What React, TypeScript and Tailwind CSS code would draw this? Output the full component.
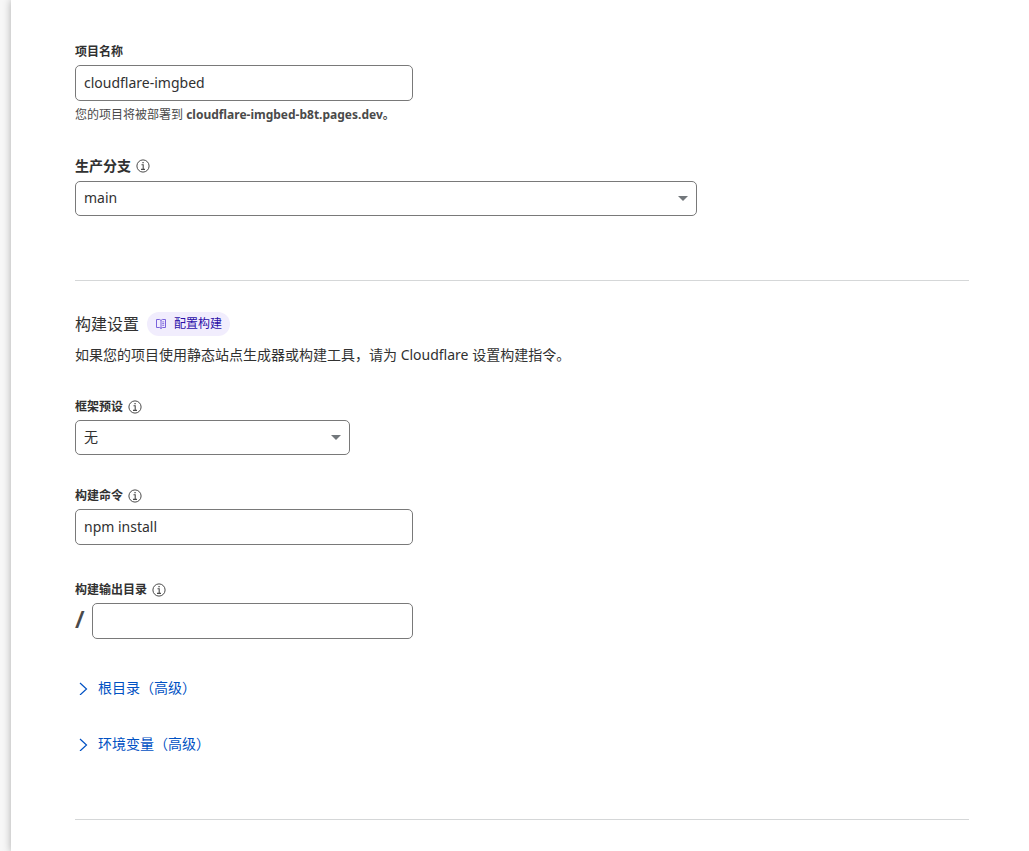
import { useId, type ReactNode } from "react";

const fieldBorder = "rounded-[5px] border border-[#797979] bg-white";

function InfoIcon() {
  return (
    <svg viewBox="0 0 14 14" className="size-3.5 shrink-0" fill="none" stroke="#4a4a4a" aria-hidden="true">
      <circle cx="7" cy="7" r="6.1" strokeWidth="1" />
      <path d="M5.5 5.7h1.7v4.6M5 10.4h4" strokeWidth="1.1" />
      <path d="M6.4 3.6h1.3" strokeWidth="1.4" />
    </svg>
  );
}

function BookIcon() {
  return (
    <svg viewBox="0 0 12 12" className="size-3 shrink-0" fill="none" stroke="#7a63dc" aria-hidden="true">
      <path d="M1.5 1.5h3.2L6 2.5l1.3-1h3.2v8H7.3l-1.3 1-1.3-1H1.5zM6 2.5v8" />
      <path d="M7.2 3.9h2M7.2 5.6h2M7.2 7.3h2" strokeWidth="0.9" />
    </svg>
  );
}

function Label({ htmlFor, info, large, children }: { htmlFor: string; info?: boolean; large?: boolean; children: ReactNode }) {
  return (
    <div className="mb-[5px] flex items-center gap-[5px]">
      <label htmlFor={htmlFor} className={large ? "text-sm leading-5 font-bold" : "text-xs leading-4 font-bold"}>
        {children}
      </label>
      {info && <InfoIcon />}
    </div>
  );
}

function TextInput({ id, value }: { id: string; value?: string }) {
  return (
    <input
      id={id}
      type="text"
      defaultValue={value}
      className={`h-9 w-full min-w-0 px-2 pb-0.5 text-sm text-[#313131] ${fieldBorder}`}
    />
  );
}

function Select({ id, value }: { id: string; value: string }) {
  return (
    <div className="relative">
      <select id={id} defaultValue={value} className={`block h-[35px] w-full appearance-none px-2 pb-0.5 text-sm text-[#313131] ${fieldBorder}`}>
        <option>{value}</option>
      </select>
      <svg viewBox="0 0 10 5" className="pointer-events-none absolute top-[15px] right-[9px] h-[5px] w-2.5" fill="#72777b" aria-hidden="true">
        <path d="M0 0h10L5 5z" />
      </svg>
    </div>
  );
}

function Disclosure({ children }: { children: ReactNode }) {
  return (
    <button type="button" className="flex items-center gap-2.5 pl-1 text-sm leading-5 text-[#0051c3]">
      <svg viewBox="0 0 9 14" className="h-3.5 w-[9px] shrink-0" fill="none" stroke="currentColor" strokeWidth="1.2" aria-hidden="true">
        <path d="M1 2l6.5 6L1 14" />
      </svg>
      {children}
    </button>
  );
}

export default function App() {
  const id = useId();
  return (
    <div className="min-h-screen bg-[#f7f7f7] pl-[11px] font-['Noto_Sans','Noto_Sans_CJK_SC',sans-serif] text-[#313131]">
      <main className="min-h-screen bg-white pt-11 pr-15 pb-8 pl-16 shadow-[0_0_8px_rgba(0,0,0,0.3)]">
        <form onSubmit={(e) => e.preventDefault()}>
          <div className="max-w-[338px]">
            <Label htmlFor={`${id}-name`}>项目名称</Label>
            <TextInput id={`${id}-name`} value="cloudflare-imgbed" />
            <p className="mt-1.5 text-xs leading-4 whitespace-nowrap text-[#4a4a4a]">
              您的项目将被部署到 <strong>cloudflare-imgbed-b8t.pages.dev。</strong>
            </p>
          </div>

          <div className="mt-[33px] max-w-[622px]">
            <Label htmlFor={`${id}-branch`} info large>生产分支</Label>
            <Select id={`${id}-branch`} value="main" />
          </div>

          <hr className="mt-16 border-[#d5d7d8]" />

          <div className="mt-[31px] flex items-center gap-2">
            <h2 className="text-base leading-6">构建设置</h2>
            <a href="#build" className="flex h-6 items-center gap-[7px] rounded-full bg-[#f1edfd] px-2 text-xs text-[#2c0fa8]">
              <BookIcon />
              配置构建
            </a>
          </div>
          <p className="mt-[9px] text-sm leading-5">如果您的项目使用静态站点生成器或构建工具，请为 Cloudflare 设置构建指令。</p>

          <div className="mt-[34px] max-w-[275px]">
            <Label htmlFor={`${id}-preset`} info>框架预设</Label>
            <Select id={`${id}-preset`} value="无" />
          </div>

          <div className="mt-[33px] max-w-[338px]">
            <Label htmlFor={`${id}-command`} info>构建命令</Label>
            <TextInput id={`${id}-command`} value="npm install" />
          </div>

          <div className="mt-[37px] max-w-[338px]">
            <Label htmlFor={`${id}-output`} info>构建输出目录</Label>
            <div className="flex items-start gap-[7px]">
              <span className="text-2xl leading-8 font-semibold text-[#4a4a4a]">/</span>
              <TextInput id={`${id}-output`} />
            </div>
          </div>

          <div className="mt-[39px] flex flex-col items-start gap-9">
            <Disclosure>根目录（高级）</Disclosure>
            <Disclosure>环境变量（高级）</Disclosure>
          </div>

          <hr className="mt-[65px] border-[#d5d7d8]" />
        </form>
      </main>
    </div>
  );
}
